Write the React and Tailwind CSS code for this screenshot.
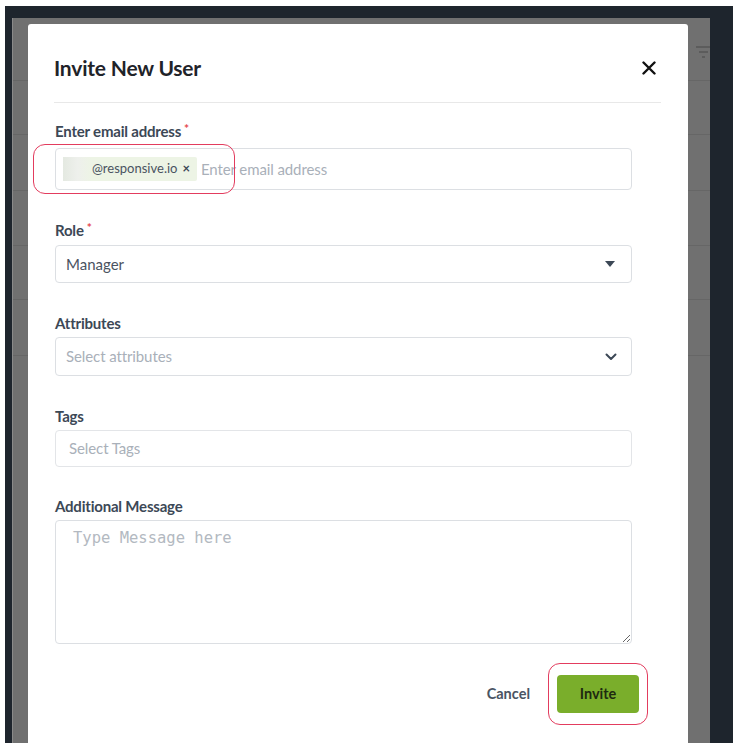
import { useState } from 'react'

const FONT = { fontFamily: 'Lato, "Open Sans", "Noto Sans", sans-serif' }

function Label({ children, required, gap = 'mb-[4px]' }) {
  return (
    <div className={`h-5 ${gap} flex items-center text-[15px] font-bold text-[#3c4856] tracking-[-0.2px]`}>
      {children}
      {required && <span className="ml-[3px] text-[12px] text-[#e5484d] -mt-1">*</span>}
    </div>
  )
}

function CaretDown() {
  return (
    <svg width="10" height="6" viewBox="0 0 10 6">
      <path d="M0 0h10L5 6z" fill="#3c4856" />
    </svg>
  )
}

function ChevronDown() {
  return (
    <svg width="12" height="8" viewBox="0 0 12 8">
      <path d="M1.5 1.5l4.5 4.5 4.5-4.5" fill="none" stroke="#3c4856" strokeWidth="2" strokeLinecap="round" strokeLinejoin="round" />
    </svg>
  )
}

export default function App() {
  const [message, setMessage] = useState('')

  return (
    <div className="w-[735px] h-[743px] bg-white pt-[6px] pl-[5px] pr-[2px] overflow-hidden" style={FONT}>
      <div className="h-full bg-[#1e252d] pt-[12px] pl-[7px] pr-[23px]">
        {/* dimmed page behind the modal */}
        <div className="relative h-full bg-[#707070] border-l border-[#8a8a8a]">
          <div className="h-[63px] border-b border-[#666]" />
          <div className="h-[54px] border-b border-[#666]" />
          <div className="h-[56px] border-b border-[#666]" />
          <div className="h-[55px] border-b border-[#666]" />
          <div className="h-[54px] border-b border-[#666]" />
          <div className="h-[56px] border-b border-[#666]" />

          <div className="absolute right-0 top-[28px] w-[14px] flex flex-col items-center gap-[3px]">
            <span className="w-[14px] h-[2px] bg-[#5c5c5c]" />
            <span className="w-[9px] h-[2px] bg-[#5c5c5c]" />
            <span className="w-[3px] h-[2px] bg-[#5c5c5c]" />
          </div>

          {/* modal */}
          <div className="absolute left-[15px] top-[6px] w-[660px] h-[760px] bg-white rounded-[3px] pt-[30px] pl-[26px] pr-[27px]">
            <div className="flex items-center justify-between h-7">
              <h1 className="text-[21px] font-bold text-[#1f2329] tracking-[-0.2px]">Invite New User</h1>
              <button className="mr-[5px] w-[14px] h-[14px] flex items-center justify-center">
                <svg width="14" height="14" viewBox="0 0 14 14">
                  <path d="M1.5 1.5l11 11M12.5 1.5l-11 11" stroke="#111" strokeWidth="2.4" strokeLinecap="round" />
                </svg>
              </button>
            </div>
            <div className="mt-[20px] h-px bg-[#e8e8e8]" />

            <div className="w-[577px] ml-px">
              {/* email */}
              <div className="mt-[18px]">
                <Label required gap="mb-[7px]">Enter email address</Label>
                <div className="relative h-[42px] border border-[#dcdfe3] rounded-[4px] flex items-center pl-[7px]">
                  <div className="h-6 flex items-center bg-[#edf4e5] rounded-[2px] pr-[7px]">
                    <span className="w-[29px] h-6 bg-gradient-to-r from-[#e4e9e1] via-[#eef0ec] to-[#edf4e5]" />
                    <span className="text-[13px] text-[#4a5361]">@responsive.io</span>
                    <span className="ml-[5px] text-[13px] text-[#3c4856] font-bold">×</span>
                  </div>
                  <span className="ml-[4px] text-[15px] text-[#a9b0b9] tracking-[-0.1px]">Enter email address</span>
                  <div className="absolute left-[-23px] top-[-5px] w-[202px] h-[50px] border-[1.5px] border-[#e33c5e] rounded-[12px]" />
                </div>
              </div>

              {/* role */}
              <div className="mt-[30px]">
                <Label required gap="mb-[5px]">Role</Label>
                <div className="h-[38px] border border-[#dcdfe3] rounded-[4px] flex items-center justify-between pl-[10px] pr-[16px]">
                  <span className="text-[15px] text-[#4a5361]">Manager</span>
                  <CaretDown />
                </div>
              </div>

              {/* attributes */}
              <div className="mt-[30px]">
                <Label>Attributes</Label>
                <div className="h-[39px] border border-[#dcdfe3] rounded-[4px] flex items-center justify-between pl-[10px] pr-[14px]">
                  <span className="text-[15px] text-[#a9b0b9] tracking-[-0.1px]">Select attributes</span>
                  <ChevronDown />
                </div>
              </div>

              {/* tags */}
              <div className="mt-[30px]">
                <Label>Tags</Label>
                <div className="h-[37px] border border-[#e3e5e8] rounded-[4px] flex items-center pl-[13px]">
                  <span className="text-[15px] text-[#a9b0b9] tracking-[-0.1px]">Select Tags</span>
                </div>
              </div>

              {/* message */}
              <div className="mt-[29px]">
                <Label>Additional Message</Label>
                <textarea
                  value={message}
                  onChange={e => setMessage(e.target.value)}
                  placeholder="Type Message here"
                  className="block w-full h-[124px] border border-[#dcdfe3] rounded-[4px] pt-[6px] px-[17px] text-[15.5px] placeholder:text-[#b3b9c1] outline-none"
                  style={{ fontFamily: '"DejaVu Sans Mono", "Liberation Mono", monospace' }}
                />
              </div>

              {/* actions */}
              <div className="mt-[31px] flex items-center justify-end">
                <button className="text-[14.5px] font-bold text-[#4a5463] mr-[27px]">Cancel</button>
                <div className="relative -mr-[7px]">
                  <button className="w-[82px] h-[38px] rounded-[4px] bg-[#7aae2b] text-[14.5px] font-bold text-[#1e2a10]">Invite</button>
                  <div className="absolute left-[-9px] top-[-12px] w-[100px] h-[62px] border-[1.5px] border-[#e33c5e] rounded-[12px]" />
                </div>
              </div>
            </div>
          </div>
        </div>
      </div>
    </div>
  )
}
